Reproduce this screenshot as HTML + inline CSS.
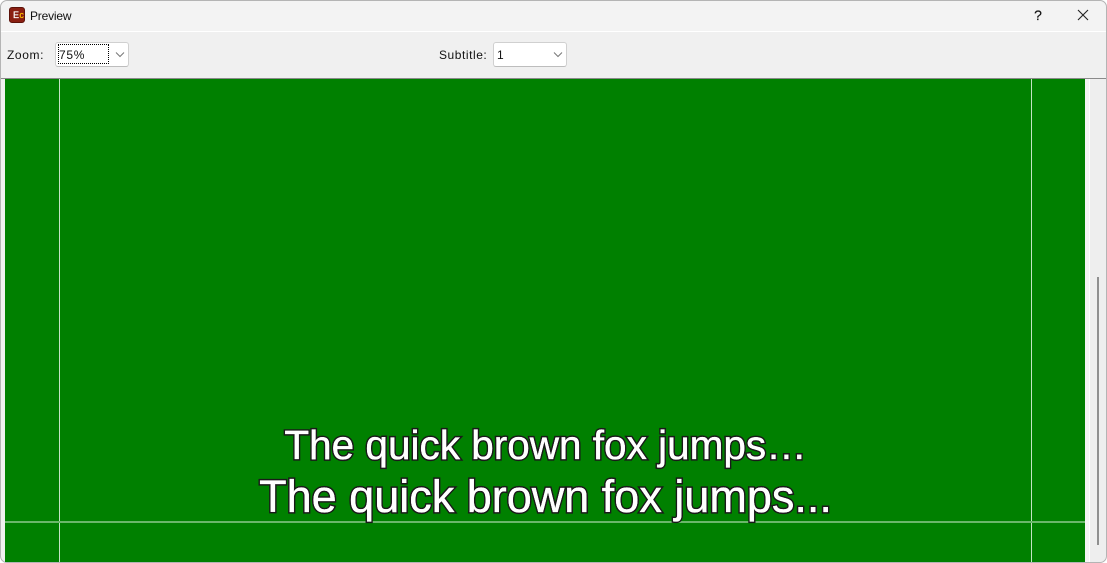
<!DOCTYPE html>
<html><head><meta charset="utf-8"><style>
html,body{margin:0;padding:0;width:1107px;height:563px;overflow:hidden;background:#fff}
body{position:relative;font-family:"Liberation Sans",sans-serif;color:#000}
div{position:absolute;box-sizing:border-box}
.lbl{font-size:12px;line-height:16px;white-space:nowrap;letter-spacing:.55px;color:#111}
.cb{background:#fff;border:1px solid #d0d0d0;border-bottom-color:#bdbdbd;border-radius:3px;height:25px;top:42px}
.sub{position:absolute;left:0;width:1107px;text-align:center;white-space:pre;font-family:"Liberation Sans",sans-serif;color:#fff;-webkit-text-stroke:3.3px #1a1a1a;paint-order:stroke fill}
.sub::after{position:absolute;left:0;top:0;width:100%;text-align:center;color:#fff;-webkit-text-stroke:.35px #fff;paint-order:stroke fill}
.s1::after{content:"The quick brown fox jumps…"}
.s2::after{content:"The quick brown fox jumps..."}
</style></head><body>
<div style="left:0;top:0;width:1107px;height:563px;background:#f0f0f0;border:1px solid #b4b4b4;border-radius:7px;overflow:hidden">
</div>
<div style="left:1px;top:1px;width:1105px;height:30px;background:#f3f3f3;border-radius:7px 7px 0 0"></div>
<div style="left:1px;top:31px;width:1105px;height:1px;background:#fff"></div>
<div style="left:1px;top:32px;width:1105px;height:46px;background:#f0f0f0"></div>
<div style="left:1px;top:78px;width:1105px;height:1px;background:#8a8a8a"></div>

<div style="left:9px;top:7px;width:16px;height:16px;background:#8a1f12;border-radius:3px;border:1px solid #5c1209"></div>
<div style="left:13px;top:10px;font-size:9px;line-height:11px;color:#fff;width:12px;white-space:nowrap;letter-spacing:.4px;-webkit-text-stroke:.2px #fff">E<span style="color:#ffc000;-webkit-text-stroke:.2px #ffc000">c</span></div>
<div class="lbl" style="left:30px;top:8px;letter-spacing:-.2px">Preview</div>

<div style="left:1033px;top:7px;font-size:14px;line-height:16px;color:#111;width:10px;text-align:center;-webkit-text-stroke:.2px #111">?</div>
<svg style="position:absolute;left:1077px;top:9px" width="12" height="12" viewBox="0 0 12 12"><path d="M1 1L11 11M11 1L1 11" stroke="#222" stroke-width="1.1" fill="none"/></svg>

<div class="lbl" style="left:7px;top:47px;letter-spacing:.6px">Zoom:</div>
<div class="cb" style="left:55px;width:74px"></div>
<div style="left:58px;top:44px;width:51px;height:20px;border:1px dotted #000"></div>
<div class="lbl" style="left:59px;top:47px;letter-spacing:.7px">75%</div>
<svg style="position:absolute;left:115px;top:51px" width="10" height="7" viewBox="0 0 10 7"><path d="M1 1.5L5 5.5L9 1.5" stroke="#777" stroke-width="1" fill="none"/></svg>

<div class="lbl" style="left:439px;top:47px">Subtitle:</div>
<div class="cb" style="left:493px;width:74px"></div>
<div class="lbl" style="left:497px;top:47px">1</div>
<svg style="position:absolute;left:553px;top:51px" width="10" height="7" viewBox="0 0 10 7"><path d="M1 1.5L5 5.5L9 1.5" stroke="#777" stroke-width="1" fill="none"/></svg>

<div style="left:5px;top:79px;width:1080px;height:483px;background:#008000;overflow:hidden"></div>
<div style="left:59px;top:79px;width:1px;height:483px;background:#c4e4c4"></div>
<div style="left:1031px;top:79px;width:1px;height:483px;background:#c4e4c4"></div>
<div style="left:5px;top:521px;width:1080px;height:2px;background:#6ab76a"></div>

<div class="sub s1" style="left:-8px;top:420px;font-size:40.5px;line-height:50px">The quick brown fox jumps…</div>
<div class="sub s2" style="left:-8px;top:471px;font-size:45px;line-height:52px">The quick brown fox jumps...</div>

<div style="left:1085px;top:79px;width:4px;height:483px;background:#f5f5f5"></div>
<div style="left:1089px;top:79px;width:1px;height:483px;background:#fff"></div>
<div style="left:1090px;top:79px;width:16px;height:483px;background:#eeeeee;border-radius:0 0 7px 0"></div>
<div style="left:1097px;top:277px;width:2px;height:268px;background:#8f8f8f"></div>
</body></html>
